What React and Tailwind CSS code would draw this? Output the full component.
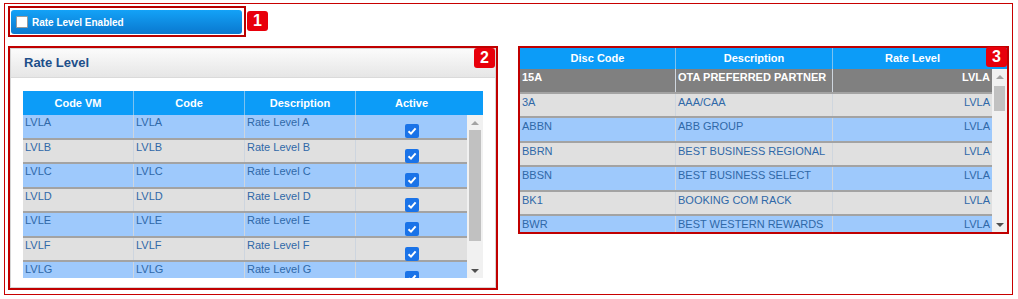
const font = { fontFamily: '"Liberation Sans", Arial, sans-serif' };

const levels = [
  { vm: "LVLA", code: "LVLA", desc: "Rate Level A" },
  { vm: "LVLB", code: "LVLB", desc: "Rate Level B" },
  { vm: "LVLC", code: "LVLC", desc: "Rate Level C" },
  { vm: "LVLD", code: "LVLD", desc: "Rate Level D" },
  { vm: "LVLE", code: "LVLE", desc: "Rate Level E" },
  { vm: "LVLF", code: "LVLF", desc: "Rate Level F" },
  { vm: "LVLG", code: "LVLG", desc: "Rate Level G" },
];

const discounts = [
  { code: "15A", desc: "OTA PREFERRED PARTNER", level: "LVLA", selected: true },
  { code: "3A", desc: "AAA/CAA", level: "LVLA" },
  { code: "ABBN", desc: "ABB GROUP", level: "LVLA" },
  { code: "BBRN", desc: "BEST BUSINESS REGIONAL", level: "LVLA" },
  { code: "BBSN", desc: "BEST BUSINESS SELECT", level: "LVLA" },
  { code: "BK1", desc: "BOOKING COM RACK", level: "LVLA" },
  { code: "BWR", desc: "BEST WESTERN REWARDS", level: "LVLA" },
];

function Badge({ n, className = "" }) {
  return (
    <div
      className={`w-[21px] h-[20px] rounded-[3px] bg-[#e8000b] text-white font-bold text-[16px] leading-none flex items-center justify-center ${className}`}
    >
      {n}
    </div>
  );
}

function Scrollbar({ width, thumbTop, thumbHeight }) {
  return (
    <div className={`${width} h-full bg-[#f1f1f1] flex flex-col items-center`}>
      <div className="h-[15px] w-full flex items-center justify-center">
        <div className="w-0 h-0 border-l-[4px] border-r-[4px] border-b-[4px] border-l-transparent border-r-transparent border-b-[#a3a3a3]" />
      </div>
      <div className="flex-1 w-full px-[2px]">
        <div className="w-full bg-[#c1c1c1]" style={{ marginTop: thumbTop, height: thumbHeight }} />
      </div>
      <div className="h-[15px] w-full flex items-center justify-center">
        <div className="w-0 h-0 border-l-[4px] border-r-[4px] border-t-[4px] border-l-transparent border-r-transparent border-t-[#505050]" />
      </div>
    </div>
  );
}

function Check() {
  return (
    <div className="w-[14px] h-[14px] rounded-[2px] bg-[#1a73e8] flex items-center justify-center">
      <svg width="10" height="10" viewBox="0 0 10 10">
        <path d="M1.5 5.2 L4 7.6 L8.6 2.4" fill="none" stroke="white" strokeWidth="2" />
      </svg>
    </div>
  );
}

function RateLevelTable() {
  return (
    <div className="w-[460px] text-[11px] whitespace-nowrap">
      <div className="h-[24px] bg-[#0c9cf8] flex text-white font-bold">
        {["Code VM", "Code", "Description"].map((h) => (
          <div key={h} className="w-[111px] border-r border-[#7cc2f0] flex items-center justify-center">
            {h}
          </div>
        ))}
        <div className="w-[111px] flex items-center justify-center">Active</div>
      </div>
      <div className="h-[163px] flex overflow-hidden">
        <div className="w-[444px]">
          {levels.map((r, i) => (
            <div
              key={r.vm}
              className={`h-[24.5px] flex border-b-2 border-[#a3a3a3] text-[#2f68a8] ${i % 2 === 0 ? "bg-[#9ec9fc]" : "bg-[#e0e0e0]"}`}
            >
              <div className="w-[111px] border-r border-[#cdd5df] pl-[2px] leading-[15px]">{r.vm}</div>
              <div className="w-[111px] border-r border-[#cdd5df] pl-[2px] leading-[15px]">{r.code}</div>
              <div className="w-[111px] border-r border-[#cdd5df] pl-[2px] leading-[15px]">{r.desc}</div>
              <div className="w-[111px] flex justify-center pt-[9px]">
                <Check />
              </div>
            </div>
          ))}
        </div>
        <Scrollbar width="w-[16px]" thumbTop={0} thumbHeight={111} />
      </div>
    </div>
  );
}

function DiscountTable() {
  return (
    <div className="text-[11px] whitespace-nowrap">
      <div className="h-[21px] bg-[#0c9cf8] flex text-white font-bold">
        <div className="w-[156px] border-r border-[#7cc2f0] flex items-center justify-center">Disc Code</div>
        <div className="w-[157px] border-r border-[#7cc2f0] flex items-center justify-center">Description</div>
        <div className="w-[159px] flex items-center justify-center">Rate Level</div>
        <div className="flex-1" />
      </div>
      <div className="h-[163px] flex overflow-hidden">
        <div className="w-[472px]">
          {discounts.map((r, i) => (
            <div
              key={r.code}
              className={`h-[24.5px] flex border-b-2 border-[#a3a3a3] leading-[15px] ${
                r.selected
                  ? "bg-[#808080] text-white font-bold"
                  : i % 2 === 1
                  ? "bg-[#e0e0e0] text-[#2f68a8]"
                  : "bg-[#9ec9fc] text-[#2f68a8]"
              }`}
            >
              <div className="w-[156px] border-r border-[#cfd6de] pl-[2px] pt-[1px] overflow-hidden">{r.code}</div>
              <div className="w-[157px] border-r border-[#cfd6de] pl-[2px] pt-[1px] overflow-hidden">{r.desc}</div>
              <div className="w-[159px] text-right pr-[2px] pt-[1px]">{r.level}</div>
            </div>
          ))}
        </div>
        <Scrollbar width="w-[15px]" thumbTop={2} thumbHeight={25} />
      </div>
    </div>
  );
}

export default function App() {
  return (
    <div className="w-[1018px] h-[299px] bg-white pt-[3px] pl-[4px]" style={font}>
      <div className="w-[1009px] h-[292px] border border-[#c80000] pl-[3px] pt-[2px]">
        {/* Top toggle */}
        <div className="flex items-start">
          <div className="w-[238px] h-[31px] border-2 border-[#b80000] pl-[1px] pt-[2px]">
            <div className="w-[231px] h-[24px] rounded-[3px] bg-gradient-to-b from-[#14a2f7] to-[#0a78cf] flex items-center pl-[5px] gap-[4px]">
              <div className="w-[12px] h-[12px] bg-white border border-[#9a9a9a] rounded-[1px]" />
              <span className="text-white font-bold text-[10px]">Rate Level Enabled</span>
            </div>
          </div>
          <Badge n="1" className="ml-[1px] mt-[5px]" />
        </div>

        <div className="flex items-start gap-[20px] mt-[9px]">
          {/* Rate level panel */}
          <div className="relative w-[490px] h-[244px] border-2 border-[#c00000]">
            <div className="h-full border border-[#d6d6d6]">
              <div className="h-[29px] bg-gradient-to-b from-[#fbfbfb] to-[#e6e6e6] border-b border-[#dadada] flex items-center pl-[13px]">
                <span className="text-[#1d4f8a] font-bold text-[13px]">Rate Level</span>
              </div>
              <div className="pl-[12px] pt-[13px]">
                <RateLevelTable />
              </div>
            </div>
            <Badge n="2" className="absolute top-0 right-[1px]" />
          </div>

          {/* Discount table */}
          <div className="relative w-[491px] h-[188px] border-2 border-[#c00000]">
            <DiscountTable />
            <Badge n="3" className="absolute top-[-1px] right-0" />
          </div>
        </div>
      </div>
    </div>
  );
}
